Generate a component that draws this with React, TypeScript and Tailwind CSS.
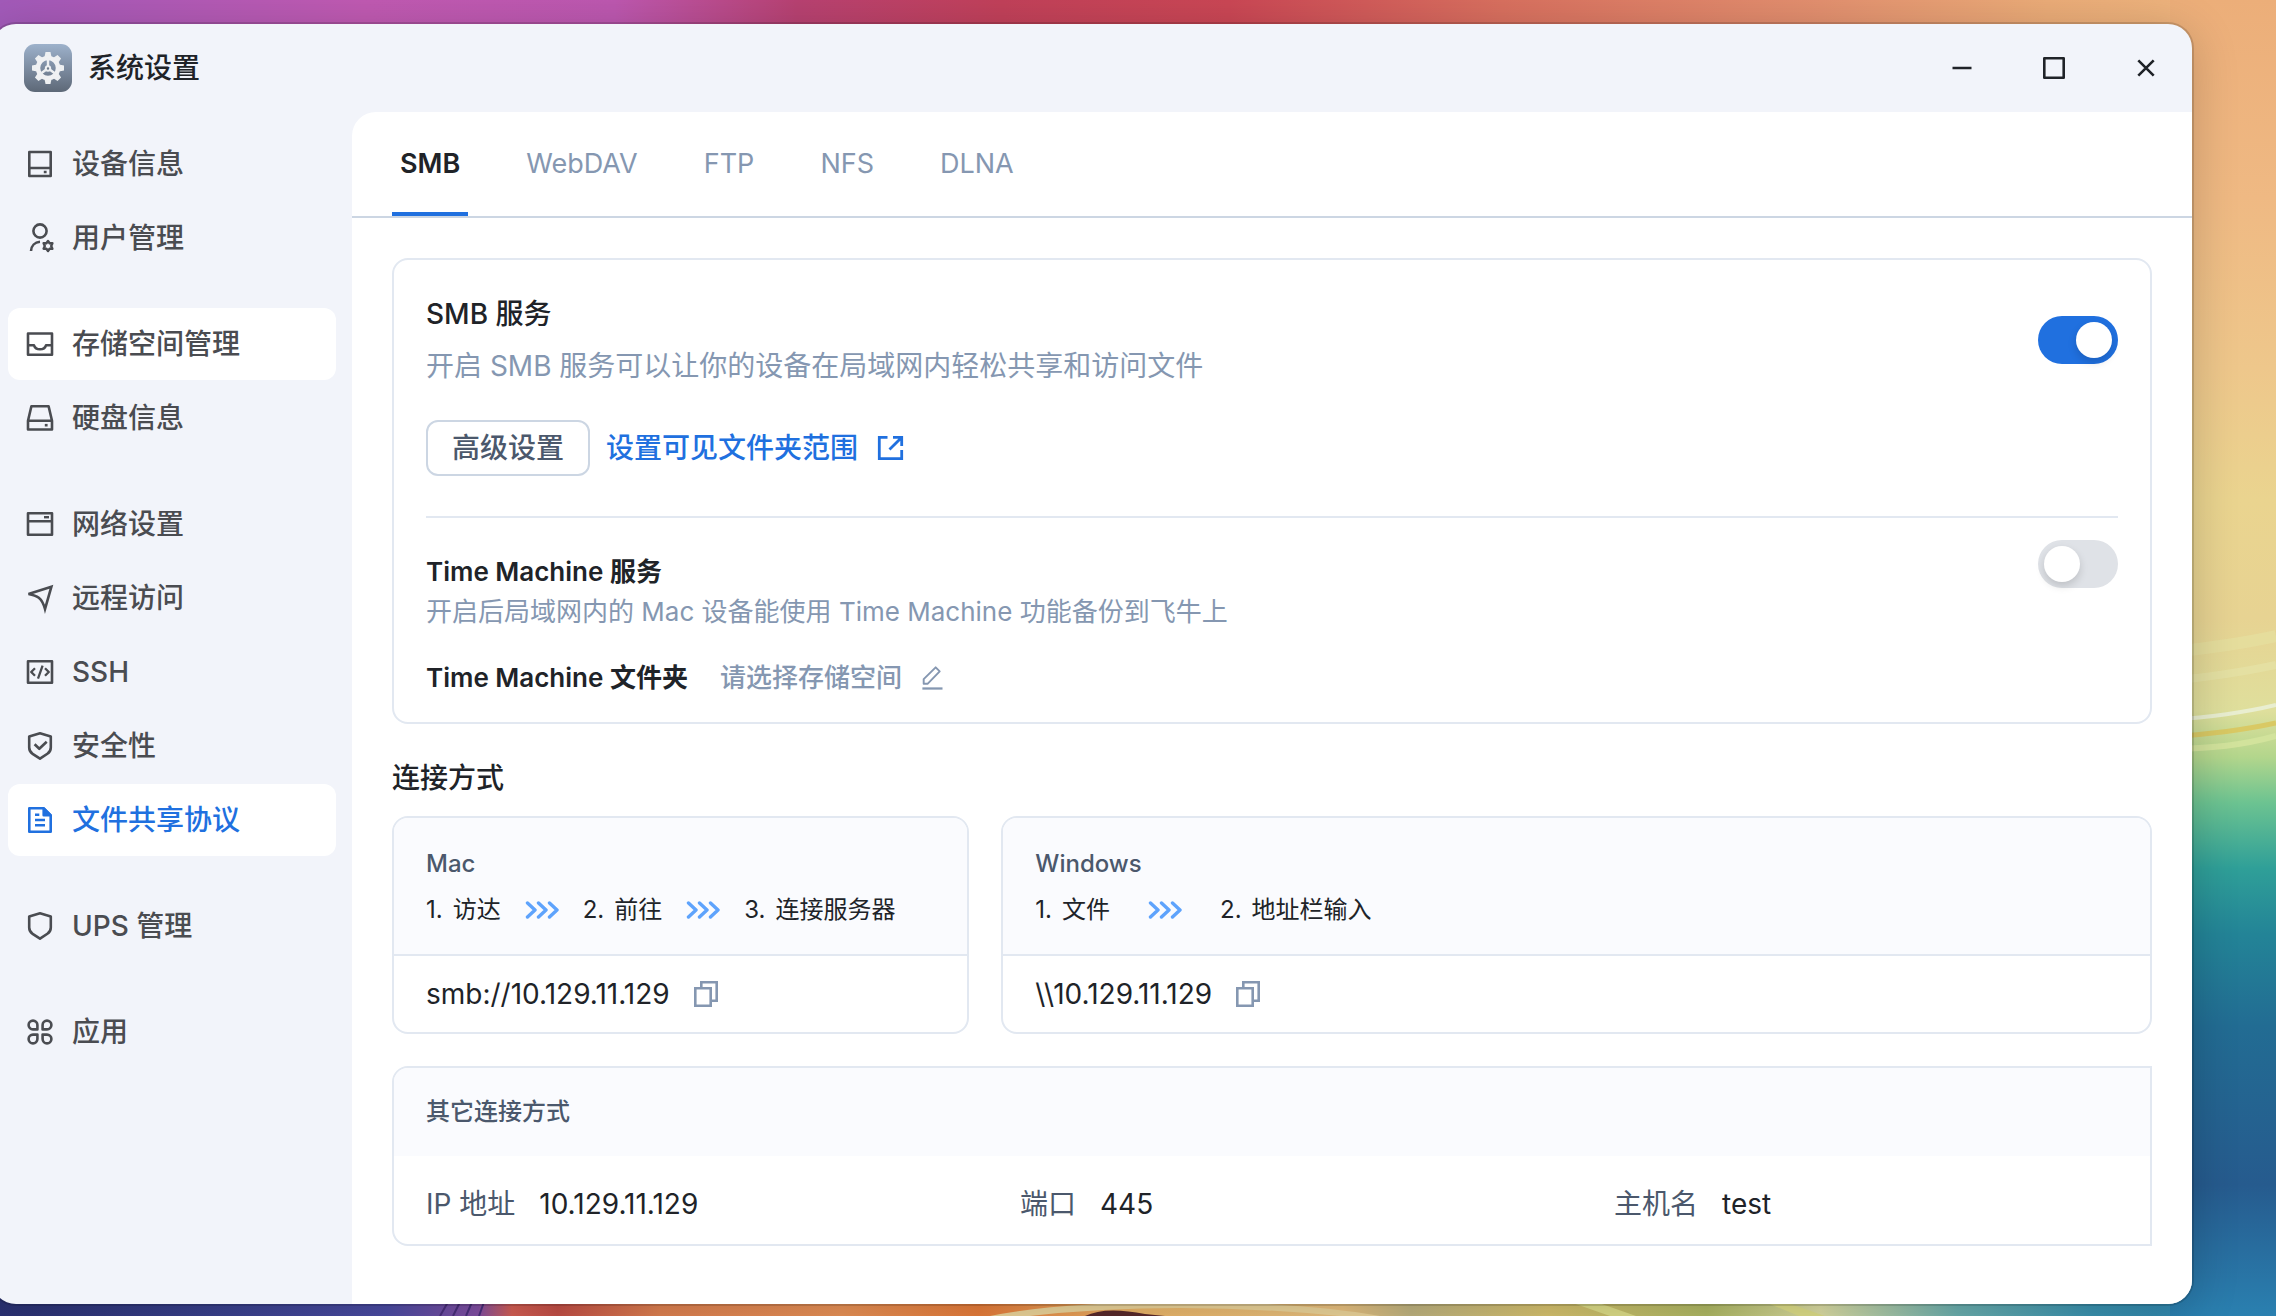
import { useState } from "react";
import type { ReactNode } from "react";
import clsx from "clsx";

type IconProps = { className?: string; children: ReactNode };

function Icon({ className = "size-8", children }: IconProps) {
  return (
    <svg
      viewBox="0 0 32 32"
      fill="none"
      stroke="currentColor"
      strokeWidth="2.6"
      strokeLinejoin="round"
      className={clsx("shrink-0", className)}
      aria-hidden="true"
    >
      {children}
    </svg>
  );
}

const SHIELD = "M16 3.3 26.8 6.4V17.5c0 2.6-1.2 4.8-3.4 6.3L16 28.7l-7.4-4.9c-2.2-1.5-3.4-3.7-3.4-6.3V6.4Z";

const icons: Record<string, ReactNode> = {
  device: (
    <Icon>
      <path d="M5.3 4h21.4v24H5.3zM5.3 20h21.4" />
      <path d="M19.8 24h2.8" />
    </Icon>
  ),
  user: (
    <Icon>
      <circle cx="16" cy="9" r="6.6" />
      <path d="M7 29c.3-5.2 3.8-8.8 9-9.2" />
      <path
        d="M24 19l1.600 2.300 2.800-.1-1.200 2.800 1.200 2.800-2.800-.1L24 29l-1.600-2.300-2.800.1 1.200-2.800-1.200-2.800 2.800.1Z"
        strokeWidth="2.4"
      />
    </Icon>
  ),
  storage: (
    <Icon>
      <path d="M4 5.500h24v21.200H4zM4 17.300h6c.8 2.500 3 4 6 4s5.200-1.500 6-4h6" />
    </Icon>
  ),
  disk: (
    <Icon>
      <path d="M7.400 4.200h17.200L28 18.800v8.700H4v-8.700ZM4 18.800h24" />
      <path d="M20.800 23.200h2.800" />
    </Icon>
  ),
  network: (
    <Icon>
      <path d="M4 5.300h24v21.400H4zM4 13.200h24" />
      <path d="M20 9.200h5" strokeWidth="2.4" />
    </Icon>
  ),
  remote: (
    <Icon>
      <path
        d="M27.400 4.700 4.500 12c4.500.8 8 2 10.300 3.700 2.800 2.200 4.800 6 6.200 11.300Z"
        strokeLinejoin="miter"
      />
    </Icon>
  ),
  ssh: (
    <Icon>
      <path d="M4 5.300h24v21.400H4z" />
      <path d="m11 12.200-3.800 3.800 3.800 3.800M21 12.200l3.800 3.800-3.800 3.800M18.600 9.700l-4.600 13" strokeWidth="2.3" />
    </Icon>
  ),
  security: (
    <Icon>
      <path d={SHIELD} />
      <path d="m10.600 14.200 4.700 4.600 7.400-7" />
    </Icon>
  ),
  file: (
    <Icon>
      <path d="M5.300 4.300h14.400l7 7v16.400H5.300z" />
      <path d="M19.700 4.300v7h7Z" fill="currentColor" />
      <path d="M11 10.700h4.300M11 16h10M11 21.300h10" />
    </Icon>
  ),
  ups: (
    <Icon>
      <path d={SHIELD} />
    </Icon>
  ),
  apps: (
    <Icon>
      <path d="M13.400 13.400H9a4.400 4.400 0 1 1 4.400-4.400zM18.600 13.400V9a4.400 4.400 0 1 1 4.400 4.400zM13.400 18.600V23A4.400 4.400 0 1 1 9 18.600zM18.600 18.600H23a4.400 4.400 0 1 1-4.400 4.400z" />
    </Icon>
  ),
};

const navGroups = [
  [
    { id: "device", label: "设备信息" },
    { id: "user", label: "用户管理" },
  ],
  [
    { id: "storage", label: "存储空间管理" },
    { id: "disk", label: "硬盘信息" },
  ],
  [
    { id: "network", label: "网络设置" },
    { id: "remote", label: "远程访问" },
    { id: "ssh", label: "SSH" },
    { id: "security", label: "安全性" },
    { id: "file", label: "文件共享协议" },
  ],
  [{ id: "ups", label: "UPS 管理" }],
  [{ id: "apps", label: "应用" }],
];

const tabs = ["SMB", "WebDAV", "FTP", "NFS", "DLNA"];

const details = [
  { label: "IP 地址", value: "10.129.11.129" },
  { label: "端口", value: "445" },
  { label: "主机名", value: "test" },
];

function Wallpaper() {
  return (
    <svg
      viewBox="0 0 2276 1316"
      preserveAspectRatio="none"
      className="absolute inset-0 -z-10 h-full w-full"
      aria-hidden="true"
    >
      <defs>
        <linearGradient id="wp-top">
          <stop offset="0" stopColor="#a25ab9" />
          <stop offset=".16" stopColor="#c05ab2" />
          <stop offset=".27" stopColor="#bd58b0" />
          <stop offset=".35" stopColor="#b84272" />
          <stop offset=".44" stopColor="#c2415a" />
          <stop offset=".54" stopColor="#cb4755" />
          <stop offset=".66" stopColor="#d9705f" />
          <stop offset=".8" stopColor="#e3906f" />
          <stop offset=".9" stopColor="#ebac78" />
          <stop offset="1" stopColor="#efb880" />
        </linearGradient>
        <linearGradient id="wp-right" x2="0" y2="1">
          <stop offset="0" stopColor="#ecae79" />
          <stop offset=".15" stopColor="#efb983" />
          <stop offset=".28" stopColor="#eec78b" />
          <stop offset=".38" stopColor="#ead48f" />
          <stop offset=".47" stopColor="#e7d392" />
          <stop offset=".54" stopColor="#dfdf9c" />
          <stop offset=".575" stopColor="#b3d68c" />
          <stop offset=".61" stopColor="#6cc391" />
          <stop offset=".66" stopColor="#2f9f98" />
          <stop offset=".71" stopColor="#238497" />
          <stop offset=".78" stopColor="#226c93" />
          <stop offset=".9" stopColor="#265b8e" />
          <stop offset="1" stopColor="#2a80b0" />
        </linearGradient>
        <linearGradient id="wp-bottom">
          <stop offset="0" stopColor="#2b3274" />
          <stop offset=".1" stopColor="#3b4290" />
          <stop offset=".17" stopColor="#4c4da6" />
          <stop offset=".21" stopColor="#8450a6" />
          <stop offset=".225" stopColor="#d86055" />
          <stop offset=".245" stopColor="#c65047" />
          <stop offset=".29" stopColor="#e28352" />
          <stop offset=".37" stopColor="#ec9458" />
          <stop offset=".43" stopColor="#ea7e3b" />
          <stop offset=".5" stopColor="#efb96b" />
          <stop offset=".59" stopColor="#ecc482" />
          <stop offset=".62" stopColor="#c2b682" />
          <stop offset=".68" stopColor="#dac570" />
          <stop offset=".75" stopColor="#b2bc66" />
          <stop offset=".8" stopColor="#dfe0a6" />
          <stop offset=".86" stopColor="#6cb1b1" />
          <stop offset=".92" stopColor="#3a94b2" />
          <stop offset="1" stopColor="#287cad" />
        </linearGradient>
      </defs>
      <rect width="2276" height="660" fill="url(#wp-top)" />
      <rect y="1200" width="2276" height="116" fill="url(#wp-bottom)" />
      <rect x="2170" width="106" height="1316" fill="url(#wp-right)" />
      <g fill="none">
        <path d="M2170 652q60-6 106-16" stroke="#e6dfa0" strokeWidth="12" strokeOpacity=".7" />
        <path d="M2170 681q60-6 106-16" stroke="#e6e2a6" strokeWidth="8" strokeOpacity=".7" />
        <path d="M2170 720q60-4 106-15" stroke="#e9eed0" strokeWidth="4" />
        <path d="M2170 737q60-4 106-14" stroke="#d9c964" strokeWidth="5" />
        <path d="M2170 749q60 0 106-13" stroke="#d2e39c" strokeWidth="6" />
      </g>
      <path d="M990 1316q70-14 190-14t200 14h-40q-80-8-160-8t-150 8z" fill="#efd79c" />
      <path d="M1085 1316q20-10 60-2l20 2z" fill="#5b2a2c" />
      <path d="M1570 1302l40 14h26l-40-14zM1765 1302l34 14h26l-40-14z" fill="#e0e08a" />
      <g stroke="#4a2f7d" strokeWidth="2">
        <path d="M448 1302l-8 14M460 1302l-7 14M472 1302l-6 14M484 1302l-5 14" />
      </g>
    </svg>
  );
}

function AppLogo() {
  return (
    <svg viewBox="0 0 48 48" className="size-12" aria-hidden="true">
      <defs>
        <linearGradient id="logo-bg" x2="0" y2="1">
          <stop offset="0" stopColor="#9db1cb" />
          <stop offset="1" stopColor="#5d6877" />
        </linearGradient>
      </defs>
      <rect width="48" height="48" rx="11" fill="url(#logo-bg)" />
      <g fill="#eef0f2">
        {[0, 45, 90, 135, 180, 225, 270, 315].map((deg) => (
          <path key={deg} d="M20.500 13l1-5h5l1 5z" transform={`rotate(${deg} 24 24)`} />
        ))}
      </g>
      <circle cx="24" cy="24" r="10" fill="none" stroke="#f0f1f3" strokeWidth="4.5" />
      <g stroke="#eef0f2" strokeWidth="2.4">
        <path d="M24 22V14M22.300 25.500l-6 4.500M25.700 25.500l6 4.500" />
        <circle cx="24" cy="24.500" r="2.200" fill="#6f7b8b" strokeWidth="2" />
      </g>
    </svg>
  );
}

function Toggle({ label, defaultChecked }: { label: string; defaultChecked?: boolean }) {
  return (
    <input
      type="checkbox"
      role="switch"
      aria-label={label}
      defaultChecked={defaultChecked}
      className="flex h-12 w-20 shrink-0 cursor-pointer appearance-none items-center rounded-full bg-[#dfe2e7] px-1.5 before:size-9 before:rounded-full before:bg-white before:shadow-[0_4px_8px_rgba(0,0,0,0.15)] before:content-[''] checked:justify-end checked:bg-[#2070df]"
    />
  );
}

function Chevrons({ className }: { className: string }) {
  return (
    <svg
      viewBox="0 0 34 20"
      fill="none"
      stroke="#5ea3fc"
      strokeWidth="3.4"
      strokeLinecap="round"
      strokeLinejoin="round"
      className={clsx("h-5 w-[34px]", className)}
      aria-hidden="true"
    >
      <path d="m2.500 3 7.500 7-7.500 7M13.500 3l7.500 7-7.500 7M24.500 3l7.500 7-7.500 7" />
    </svg>
  );
}

type ConnectCardProps = {
  title: string;
  steps: string[];
  address: string;
  className: string;
  arrowClass: string;
};

function ConnectCard({ title, steps, address, className, arrowClass }: ConnectCardProps) {
  return (
    <section className={clsx("overflow-hidden rounded-2xl border-2 border-[#e2e8f1]", className)}>
      <div className="border-b-2 border-[#e2e8f1] bg-[#fafbfe] px-8 pt-7 pb-[26px] text-2xl leading-9">
        <h3 className="font-medium text-[#4b586c]">{title}</h3>
        <ol className="mt-2.5 flex items-center text-[#202328]">
          {steps.map((step, i) => (
            <li key={step} className="flex items-center whitespace-nowrap">
              {i > 0 && <Chevrons className={arrowClass} />}
              <span className="mr-2.5">{i + 1}.</span>
              {step}
            </li>
          ))}
        </ol>
      </div>
      <div className="flex h-[76px] items-center gap-5 px-8 text-[28px] text-[#202328]">
        <span>{address}</span>
        <button type="button" aria-label="复制" className="text-[#8597b1]">
          <Icon className="block size-8">
            <path d="M5.300 10.300h15.400v17.400H5.300z" strokeLinejoin="miter" />
            <path d="M11.300 9V4.300h15.400v18.400H22" strokeLinejoin="miter" />
          </Icon>
        </button>
      </div>
    </section>
  );
}

export default function App() {
  const [activeTab, setActiveTab] = useState("SMB");

  return (
    <div className="relative isolate flex min-h-screen overflow-hidden pt-6 pr-[84px] pb-3 font-[Inter,'Noto_Sans_CJK_SC',sans-serif] text-[#202328]">
      <Wallpaper />

      <div className="-ml-2 flex flex-1 flex-col overflow-hidden rounded-3xl bg-[#f2f4fa] shadow-[0_0_0_2px_rgba(0,0,0,0.14),0_8px_48px_rgba(0,0,0,0.2)]">
        <header className="flex h-22 items-center justify-between pl-8">
          <div className="flex items-center gap-4">
            <AppLogo />
            <h1 className="text-[28px] font-medium">系统设置</h1>
          </div>
          <div className="flex">
            <button type="button" aria-label="最小化" className="flex h-22 w-[92px] items-center justify-center">
              <Icon>
                <path d="M6.500 16h19" />
              </Icon>
            </button>
            <button type="button" aria-label="最大化" className="flex h-22 w-[92px] items-center justify-center">
              <Icon>
                <path d="M6.300 6.300h19.400v19.400H6.300z" />
              </Icon>
            </button>
            <button type="button" aria-label="关闭" className="flex h-22 w-[92px] items-center justify-center">
              <Icon>
                <path d="m8.300 8.300 15.400 15.400M23.700 8.300 8.300 23.700" />
              </Icon>
            </button>
          </div>
        </header>

        <div className="flex flex-1">
          <nav className="flex w-[360px] shrink-0 flex-col gap-[34px] p-4">
            {navGroups.map((group, i) => (
              <ul key={i} className="flex flex-col gap-0.5">
                {group.map((item) => (
                  <li key={item.id}>
                    <a
                      href={`#${item.id}`}
                      aria-current={item.id === "file" ? "page" : undefined}
                      className={clsx(
                        "flex h-18 items-center gap-4 rounded-xl px-4 text-[28px] font-medium",
                        item.id === "file" ? "text-[#2070df]" : "text-[#4a4c51]",
                        (item.id === "file" || item.id === "storage") && "bg-white",
                      )}
                    >
                      {icons[item.id]}
                      {item.label}
                    </a>
                  </li>
                ))}
              </ul>
            ))}
          </nav>

          <main className="min-w-0 flex-1 rounded-tl-3xl bg-white">
            <div role="tablist" className="flex h-[106px] gap-[50px] border-b-2 border-[#ccd6e3] px-10">
              {tabs.map((tab) => (
                <button
                  key={tab}
                  type="button"
                  role="tab"
                  aria-selected={activeTab === tab}
                  onClick={() => setActiveTab(tab)}
                  className={clsx(
                    "border-b-4 px-2 pt-1 text-[27px]",
                    activeTab === tab
                      ? "border-[#2070df] font-semibold"
                      : "border-transparent text-[#8597b1]",
                  )}
                >
                  {tab}
                </button>
              ))}
            </div>

            <div className="px-10 pt-10 pb-14">
              <section className="rounded-2xl border-2 border-[#e2e8f1] px-8 pb-6">
                <div className="flex items-start justify-between pt-8 pb-10">
                  <div className="text-[28px] leading-[44px]">
                    <h2 className="font-medium">SMB 服务</h2>
                    <p className="mt-2 text-[#8597b1]">
                      开启 SMB 服务可以让你的设备在局域网内轻松共享和访问文件
                    </p>
                    <div className="mt-8 flex items-center gap-4 font-medium">
                      <button
                        type="button"
                        className="flex h-14 items-center rounded-xl border-2 border-[#ccd6e3] px-6 text-[#4b586c]"
                      >
                        高级设置
                      </button>
                      <a href="#folders" className="flex items-center gap-4 text-[#2070df]">
                        设置可见文件夹范围
                        <Icon>
                          <path d="M13.500 5.300H5.300v21.400h22.400V18M19 5.300h8.700V14M27.300 5.700 15.500 17.500" strokeWidth="2.8" strokeLinejoin="miter" />
                        </Icon>
                      </a>
                    </div>
                  </div>
                  <div className="pt-6">
                    <Toggle label="SMB 服务" defaultChecked />
                  </div>
                </div>

                <div className="flex items-start justify-between border-t-2 border-[#e2e8f1] pt-[22px] text-[26px] leading-10">
                  <div className="pt-3">
                    <h2 className="font-semibold">Time Machine 服务</h2>
                    <p className="text-[#8597b1]">
                      开启后局域网内的 Mac 设备能使用 Time Machine 功能备份到飞牛上
                    </p>
                    <div className="mt-[26px] flex items-center gap-8">
                      <h3 className="font-semibold">Time Machine 文件夹</h3>
                      <button type="button" className="flex items-center gap-4 font-medium text-[#8597b1]">
                        请选择存储空间
                        <Icon className="size-7">
                          <path d="M5 28h23" />
                          <path d="M6.500 22.500v-5.200L20.200 3.800l4.600 4.600L11.200 22.500z" strokeWidth="2.2" />
                        </Icon>
                      </button>
                    </div>
                  </div>
                  <Toggle label="Time Machine 服务" />
                </div>
              </section>

              <h2 className="mt-8 text-[28px] leading-[44px] font-medium">连接方式</h2>

              <div className="mt-4 flex gap-8">
                <ConnectCard
                  title="Mac"
                  steps={["访达", "前往", "连接服务器"]}
                  address="smb://10.129.11.129"
                  className="flex-1"
                  arrowClass="mx-6"
                />
                <ConnectCard
                  title="Windows"
                  steps={["文件", "地址栏输入"]}
                  address="\\10.129.11.129"
                  className="flex-2"
                  arrowClass="mx-[38px]"
                />
              </div>

              <section className="mt-8 overflow-hidden rounded-l-2xl border-2 border-[#e2e8f1]">
                <h3 className="flex h-22 items-center bg-[#fafbfe] px-8 text-2xl font-medium text-[#4b586c]">
                  其它连接方式
                </h3>
                <dl className="grid h-22 grid-cols-3 items-center gap-[90px] px-8 pt-2 text-[28px]">
                  {details.map((item) => (
                    <div key={item.label} className="flex gap-6">
                      <dt className="text-[#4b586c]">{item.label}</dt>
                      <dd>{item.value}</dd>
                    </div>
                  ))}
                </dl>
              </section>
            </div>
          </main>
        </div>
      </div>
    </div>
  );
}
